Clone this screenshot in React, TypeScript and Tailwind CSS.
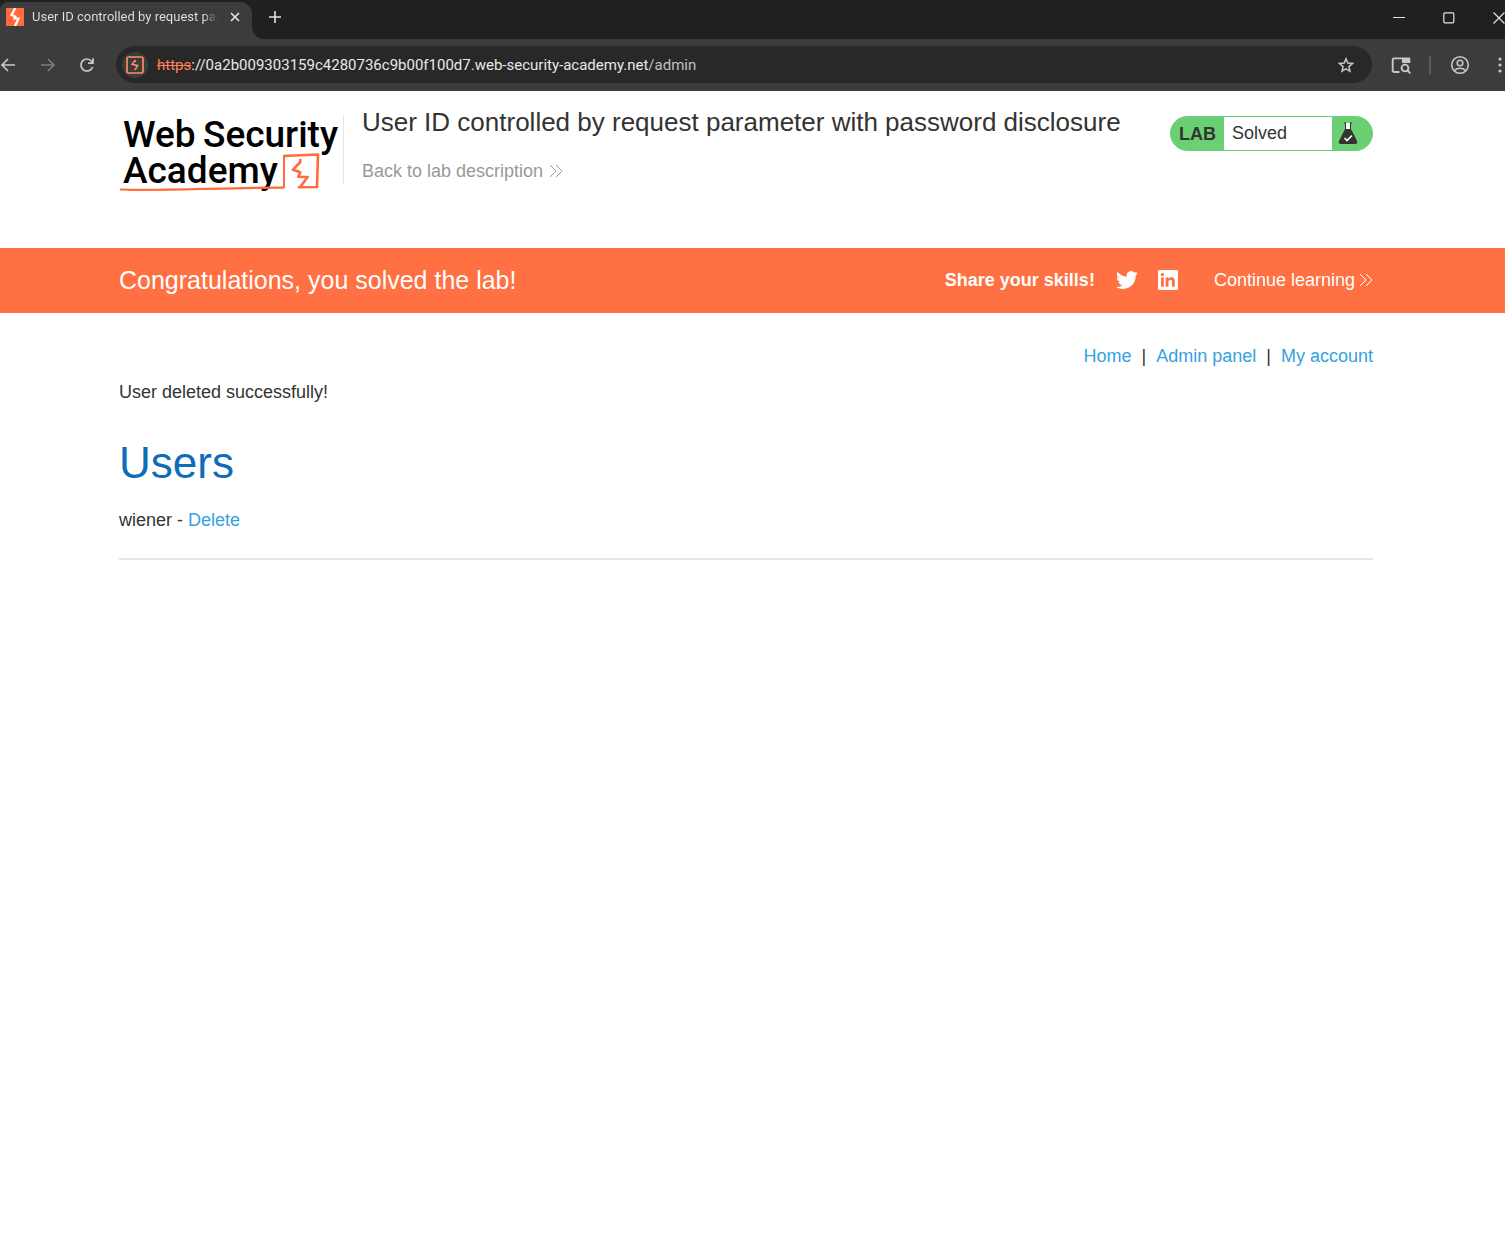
import type { ReactNode } from "react";

const content = "pl-[119px] pr-[132px]";

function Chevrons({ className }: { className: string }) {
  return (
    <svg viewBox="0 0 14 14" width="14" height="14" fill="none" stroke="currentColor" strokeWidth="1" className={className} aria-hidden="true">
      <path d="M1 1l6 6-6 6M7 1l6 6-6 6" />
    </svg>
  );
}

function IconButton({ label, className, children }: { label: string; className: string; children: ReactNode }) {
  return (
    <button type="button" aria-label={label} className={`flex shrink-0 items-center justify-center ${className}`}>
      {children}
    </button>
  );
}

function TabStrip() {
  return (
    <div className="flex h-[39px] items-stretch overflow-hidden bg-[#1f2120] text-[#e3e3e3]">
      <div className="mt-0.5 flex w-[252px] shrink-0 items-center rounded-tl-lg rounded-tr-xl bg-[#3c3c3c] pb-2 pl-1.5">
        <svg viewBox="0 0 18 18" width="18" height="18" className="shrink-0" aria-hidden="true">
          <rect width="18" height="18" fill="#ff6b3d" />
          <path d="M9.300 0L5.500 7 9.300 8.600 8.500 10.300 12.600 10.600 9 18" fill="none" stroke="#fff" strokeWidth="2.200" />
        </svg>
        <span className="ml-2 w-[186px] overflow-hidden whitespace-nowrap bg-linear-to-r from-[#e3e3e3] from-92% to-[#3c3c3c] bg-clip-text font-[Roboto,sans-serif] text-[13px] leading-5 text-transparent">
          User ID controlled by request parameter
        </span>
        <IconButton label="Close tab" className="ml-[9px] size-4">
          <svg viewBox="0 0 16 16" width="16" height="16" stroke="currentColor" strokeWidth="1.700" aria-hidden="true">
            <path d="M4 4l8 8M12 4l-8 8" />
          </svg>
        </IconButton>
      </div>
      <svg viewBox="0 0 12 12" width="12" height="12" className="shrink-0 self-end" aria-hidden="true">
        <path d="M0 0v12h12A12 12 0 0 1 0 0z" fill="#3c3c3c" />
      </svg>
      <IconButton label="New tab" className="-ml-px mb-1.5 w-6">
        <svg viewBox="0 0 16 16" width="16" height="16" stroke="currentColor" strokeWidth="1.600" aria-hidden="true">
          <path d="M8 2v12M2 8h12" />
        </svg>
      </IconButton>
      <div className="mb-1 ml-auto flex items-center gap-[38px]">
        <IconButton label="Minimize" className="size-3">
          <svg viewBox="0 0 12 12" width="12" height="12" stroke="currentColor" aria-hidden="true">
            <path d="M0 5.500h12" />
          </svg>
        </IconButton>
        <IconButton label="Maximize" className="size-3">
          <svg viewBox="0 0 12 12" width="12" height="12" fill="none" stroke="currentColor" strokeWidth="1.200" aria-hidden="true">
            <rect x="0.8" y="0.8" width="10" height="10" rx="1" />
          </svg>
        </IconButton>
        <IconButton label="Close window" className="size-3">
          <svg viewBox="0 0 12 12" width="12" height="12" stroke="currentColor" strokeWidth="1.200" aria-hidden="true">
            <path d="M0.500 0.500l11 11M11.500 0.500l-11 11" />
          </svg>
        </IconButton>
      </div>
    </div>
  );
}

function Toolbar() {
  return (
    <div className="flex h-[52px] items-center overflow-hidden bg-[#3c3c3c] pb-px text-[#c7c7c7]">
      <IconButton label="Back" className="w-4">
        <svg viewBox="0 0 16 16" width="16" height="16" fill="none" stroke="currentColor" strokeWidth="1.700" aria-hidden="true">
          <path d="M15 8H2M8 2L2 8l6 6" />
        </svg>
      </IconButton>
      <IconButton label="Forward" className="ml-6 w-4 text-[#7c7c7c]">
        <svg viewBox="0 0 16 16" width="16" height="16" fill="none" stroke="currentColor" strokeWidth="1.700" aria-hidden="true">
          <path d="M1 8h13M8 2l6 6-6 6" />
        </svg>
      </IconButton>
      <IconButton label="Reload" className="ml-[23px] w-4">
        <svg viewBox="0 0 16 16" width="16" height="16" fill="none" stroke="currentColor" strokeWidth="1.700" aria-hidden="true">
          <path d="M13.600 10A6 6 0 1 1 12.600 4.200L14 5.800M14 1.200v4.900H9" />
        </svg>
      </IconButton>
      <div className="ml-[21px] flex h-[37px] min-w-0 flex-1 items-center rounded-full bg-[#282828] pl-1.5 pr-[18px]">
        <IconButton label="View site information" className="size-[26px] rounded-full bg-[#3c3c3c] text-[#ff8d68]">
          <svg viewBox="0 0 18 18" width="18" height="18" fill="none" stroke="currentColor" strokeWidth="1.700" aria-hidden="true">
            <rect x="1" y="1" width="16" height="16" rx="1.500" />
            <path d="M9.300 4L6 8.300 9.300 9.200 9 8.800 11.800 9.400 8.800 14M9.300 4.500V6" strokeWidth="1.400" />
          </svg>
        </IconButton>
        <div className="ml-[9px] flex-1 whitespace-nowrap font-[Roboto,sans-serif] text-[15px] leading-5 text-[#e8e8e8]">
          <span className="text-[#ff7f57] line-through">https</span>://0a2b009303159c4280736c9b00f100d7.web-security-academy.net<span className="text-[#c0c0c0]">/admin</span>
        </div>
        <IconButton label="Bookmark this tab" className="size-4">
          <svg viewBox="0 0 16 16" width="16" height="16" fill="none" stroke="currentColor" strokeWidth="1.500" aria-hidden="true">
            <path d="M8 1.800l1.800 4.300 4.700.4-3.600 3.100 1.100 4.600L8 11.800l-4 2.400 1.100-4.600L1.500 6.500l4.700-.4z" />
          </svg>
        </IconButton>
      </div>
      <IconButton label="Search tabs" className="ml-[19px] size-5">
        <svg viewBox="0 0 20 20" width="20" height="20" fill="none" stroke="currentColor" strokeWidth="1.900" aria-hidden="true">
          <path d="M8.500 17H3a1.300 1.300 0 0 1-1.300-1.300V4.700A1.300 1.300 0 0 1 3 3.400h8" />
          <path d="M11 2.500h7a1.300 1.300 0 0 1 1.300 1.300V8H11z" fill="currentColor" stroke="none" />
          <circle cx="14" cy="13" r="3.400" />
          <path d="M16.500 15.500l2.900 2.900" />
        </svg>
      </IconButton>
      <span className="ml-[18px] h-[18px] w-0.5 shrink-0 bg-[#5c5c5c]" />
      <IconButton label="Profile" className="ml-[19px] size-5">
        <svg viewBox="0 0 20 20" width="20" height="20" fill="none" stroke="currentColor" strokeWidth="1.600" aria-hidden="true">
          <circle cx="10" cy="10" r="8.300" />
          <circle cx="10" cy="8" r="2.800" />
          <path d="M4.300 15.500c3-3 8.400-3 11.400 0" />
        </svg>
      </IconButton>
      <IconButton label="Menu" className="ml-[25px] w-2.5">
        <svg viewBox="0 0 4 16" width="4" height="16" fill="currentColor" aria-hidden="true">
          <circle cx="2" cy="2" r="1.600" />
          <circle cx="2" cy="8" r="1.600" />
          <circle cx="2" cy="14" r="1.600" />
        </svg>
      </IconButton>
    </div>
  );
}

function AcademyLogo() {
  return (
    <a href="#academy" aria-label="Web Security Academy" className="block shrink-0">
      <svg viewBox="0 0 220 80" width="220" height="80" className="overflow-visible">
        <g fill="#000" fontFamily="Roboto, sans-serif" fontWeight="500" fontSize="37">
          <text x="4" y="31">Web</text>
          <text x="84" y="31">Security</text>
          <text x="4" y="67">Academy</text>
        </g>
        <g fill="none" stroke="#ff6b3d" strokeLinejoin="round">
          <path d="M1 73.500C50 75 110 71 165 71.500V40" strokeWidth="2" />
          <path d="M10 74.500C60 74 110 73 164 72" strokeWidth="1" />
          <path d="M164 40l35-1.500-1 32.500-19 .3" strokeWidth="2.600" />
          <path d="M181.300 43v3L174 53.700l7.300 2.600-2 4.400 9.400.3-7.700 10.300" strokeWidth="2.600" />
        </g>
      </svg>
    </a>
  );
}

function LabStatus() {
  return (
    <div className="flex h-[35px] w-[203px] shrink-0 overflow-hidden rounded-full border border-[#6bcf74] bg-[#6bcf74] text-lg text-[#333332]">
      <span className="flex w-[53px] items-center justify-center font-bold">LAB</span>
      <span className="flex flex-1 items-center bg-white pb-px pl-2">Solved</span>
      <span className="flex w-10 items-center pb-0.5 pl-1.5">
        <svg viewBox="0 0 20 24" width="20" height="24" aria-hidden="true">
          <path d="M7 2h6v7H7z" fill="#fff" />
          <path d="M6 1.500h2v1H6zM12 1.500h2v1h-2zM7 2.500h1V9H7zM12 2.500h1V9h-1z" fill="#333332" />
          <path d="M7 8h6l6 12q1 3-2 3H3q-3 0-2-3z" fill="#333332" />
          <path d="M6.500 17l2.500 2.500 5-5" fill="none" stroke="#fff" strokeWidth="1.600" />
        </svg>
      </span>
    </div>
  );
}

function LabHeader() {
  return (
    <header className={`flex h-[157px] items-start ${content}`}>
      <div className="mt-[25px] flex">
        <AcademyLogo />
        <span className="ml-1 h-[68px] w-px bg-[#e4e4e4]" />
      </div>
      <div className="ml-[18px] mt-[15px] min-w-0 flex-1">
        <h2 className="whitespace-nowrap text-[26px] leading-8">User ID controlled by request parameter with password disclosure</h2>
        <a href="#description" className="mt-[21px] flex items-center text-lg leading-6 text-[#999]">
          Back to lab description
          <Chevrons className="ml-1.5" />
        </a>
      </div>
      <div className="mt-[25px]">
        <LabStatus />
      </div>
    </header>
  );
}

function SolvedBanner() {
  return (
    <section className={`flex h-[65px] items-center bg-[#ff7042] pb-0.5 text-lg text-white ${content}`}>
      <h4 className="text-[25px] leading-8">Congratulations, you solved the lab!</h4>
      <span className="ml-auto font-bold">Share your skills!</span>
      <a href="#twitter" aria-label="Share on Twitter" className="ml-[21px]">
        <svg viewBox="0 0 24 24" width="22" height="22" fill="currentColor" aria-hidden="true">
          <path d="M23.953 4.570a10 10 0 0 1-2.825.775 4.958 4.958 0 0 0 2.163-2.723c-.951.555-2.005.959-3.127 1.184a4.920 4.920 0 0 0-8.384 4.482C7.690 8.095 4.067 6.130 1.640 3.162a4.822 4.822 0 0 0-.666 2.475c0 1.710.870 3.213 2.188 4.096a4.904 4.904 0 0 1-2.228-.616v.060a4.923 4.923 0 0 0 3.946 4.827 4.996 4.996 0 0 1-2.212.085 4.936 4.936 0 0 0 4.604 3.417 9.867 9.867 0 0 1-6.102 2.105c-.390 0-.779-.023-1.170-.067a13.995 13.995 0 0 0 7.557 2.209c9.053 0 13.998-7.496 13.998-13.985 0-.210 0-.420-.015-.630A9.935 9.935 0 0 0 24 4.590z" />
        </svg>
      </a>
      <a href="#linkedin" aria-label="Share on LinkedIn" className="ml-5">
        <svg viewBox="0 0 20 20" width="20" height="20" aria-hidden="true">
          <rect width="20" height="20" rx="1" fill="#fff" />
          <path d="M3 7.600h2.800v9.200H3zM7.600 7.600h2.700v1.300c.5-.9 1.500-1.600 2.900-1.600 2.900 0 3.600 1.800 3.600 4.400v5.100H14v-4.500c0-1.100 0-2.500-1.600-2.500s-1.900 1.200-1.900 2.400v4.600H7.600z" fill="#ff7042" />
          <circle cx="4.400" cy="4.600" r="1.700" fill="#ff7042" />
        </svg>
      </a>
      <a href="#learning" className="ml-9 flex items-center">
        Continue learning
        <Chevrons className="ml-1" />
      </a>
    </section>
  );
}

export default function App() {
  return (
    <div className="min-h-screen bg-white font-['Liberation_Sans',Arial,sans-serif] text-[#333332]">
      <TabStrip />
      <Toolbar />
      <LabHeader />
      <SolvedBanner />
      <main className={`text-lg leading-6 ${content}`}>
        <nav className="flex justify-end gap-2.5 pt-[31px]">
          <a href="#home" className="text-[#33a3df]">Home</a>
          <span>|</span>
          <a href="#admin" className="text-[#33a3df]">Admin panel</a>
          <span>|</span>
          <a href="#account" className="text-[#33a3df]">My account</a>
        </nav>
        <p className="mt-3">User deleted successfully!</p>
        <h1 className="mt-8 text-[44px] leading-[54px] text-[#0f6cb6]">Users</h1>
        <p className="mt-[18px]">
          wiener - <a href="#delete" className="text-[#33a3df]">Delete</a>
        </p>
        <hr className="mt-[26px] border-t-2 border-[#e5e5e5]" />
      </main>
    </div>
  );
}
